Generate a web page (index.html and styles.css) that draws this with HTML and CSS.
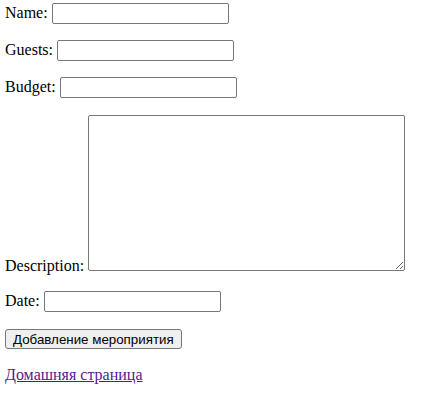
FILE: index.html
```html
<!DOCTYPE html>
<html>
<head>
<meta charset="utf-8">
<link rel="stylesheet" href="styles.css">
</head>
<body>
<form class="event-form">
  <div class="row"><label>Name: <input type="text" class="field"></label></div>
  <div class="row"><label>Guests: <input type="text" class="field"></label></div>
  <div class="row"><label>Budget: <input type="text" class="field"></label></div>
  <div class="row row-desc"><label>Description: <textarea class="area"></textarea></label></div>
  <div class="row"><label>Date: <input type="text" class="field"></label></div>
  <div class="row row-btn"><button type="button" class="btn">Добавление мероприятия</button></div>
  <div class="row row-link"><a href="#" class="home">Домашняя страница</a></div>
</form>
</body>
</html>
```
FILE: styles.css
```css
html, body {
  background: #fff;
}
body {
  margin: 0;
  padding: 3px 5px;
  font-family: "Liberation Serif", "Times New Roman", serif;
  font-size: 16px;
  color: #000;
}
.row {
  margin: 0 0 16px;
}
.row-desc {
  padding-top: 1px;
}
.row-btn {
  padding-top: 1px;
}
.row-link {
  padding-top: 1px;
}
.field {
  box-sizing: border-box;
  width: 177px;
  height: 21px;
  padding: 1px 2px;
  border: 1px solid #767676;
  border-radius: 2px;
  font-family: "Liberation Sans", Arial, sans-serif;
  font-size: 13.33px;
  background: #fff;
}
.area {
  box-sizing: border-box;
  width: 317px;
  height: 156px;
  border: 1px solid #767676;
  border-radius: 2px;
  padding: 2px;
  font-family: "Liberation Mono", monospace;
  font-size: 13.33px;
  vertical-align: baseline;
}
.btn {
  box-sizing: border-box;
  height: 20px;
  padding: 1px 7px;
  border: 1px solid #767676;
  border-radius: 3px;
  background: #efefef;
  font-family: "Liberation Sans", Arial, sans-serif;
  font-size: 13.33px;
  color: #000;
}
.home {
  color: #551a8b;
}
```
